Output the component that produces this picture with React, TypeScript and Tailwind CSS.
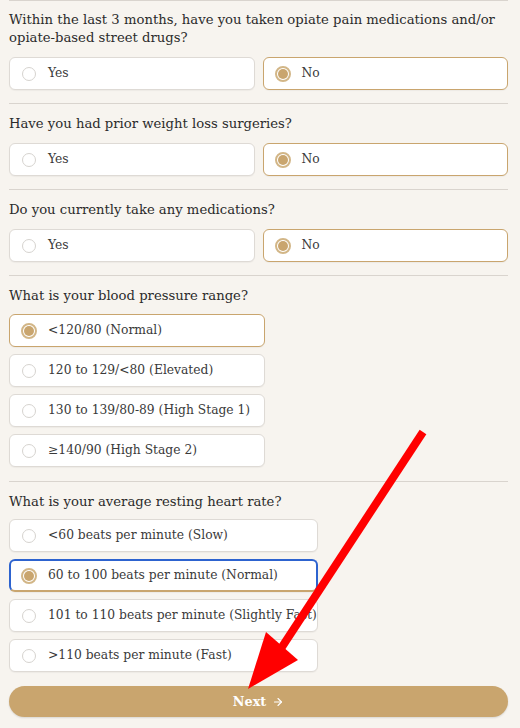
import React, { useState } from "react";
import { ArrowRight } from "lucide-react";

const serif = "font-['DejaVu_Serif','Liberation_Serif',serif]";

type Q = {
  id: string;
  text: string;
  options: string[];
  layout: "row" | "stack";
  width?: string;
  spacing: string;
};

const questions: Q[] = [
  {
    id: "opiate",
    text: "Within the last 3 months, have you taken opiate pain medications and/or opiate-based street drugs?",
    options: ["Yes", "No"],
    layout: "row",
    spacing: "pt-[10px] pb-[13px] [&>h2]:mb-[10px]",
  },
  {
    id: "surgery",
    text: "Have you had prior weight loss surgeries?",
    options: ["Yes", "No"],
    layout: "row",
    spacing: "pt-[11px] pb-[13px] [&>h2]:mb-[10px]",
  },
  {
    id: "meds",
    text: "Do you currently take any medications?",
    options: ["Yes", "No"],
    layout: "row",
    spacing: "pt-[11px] pb-[13px] [&>h2]:mb-[10px]",
  },
  {
    id: "bp",
    text: "What is your blood pressure range?",
    options: [
      "<120/80 (Normal)",
      "120 to 129/<80 (Elevated)",
      "130 to 139/80-89 (High Stage 1)",
      "≥140/90 (High Stage 2)",
    ],
    layout: "stack",
    width: "w-[256px]",
    spacing: "pt-[11px] pb-[14px] [&>h2]:mb-[9px]",
  },
  {
    id: "hr",
    text: "What is your average resting heart rate?",
    options: [
      "<60 beats per minute (Slow)",
      "60 to 100 beats per minute (Normal)",
      "101 to 110 beats per minute (Slightly Fast)",
      ">110 beats per minute (Fast)",
    ],
    layout: "stack",
    width: "w-[309px]",
    spacing: "pt-[11px] pb-[14px] [&>h2]:mb-[8px]",
  },
];

function Radio({ checked }: { checked: boolean }) {
  if (checked) {
    return (
      <span className="flex h-[16px] w-[16px] shrink-0 items-center justify-center rounded-full border-2 border-[#d2b687] bg-white">
        <span className="h-[10px] w-[10px] rounded-full bg-[#c9a56e]" />
      </span>
    );
  }
  return <span className="mx-px h-[14px] w-[14px] shrink-0 rounded-full border border-[#d6d3cf] bg-white" />;
}

function Option({
  label,
  checked,
  focused,
  onClick,
  className,
}: {
  label: string;
  checked: boolean;
  focused?: boolean;
  onClick: () => void;
  className?: string;
}) {
  const border = focused
    ? "border-2 border-[#2d63cf] border-b-[#c9a56e] pl-[10px]"
    : checked
      ? "border border-[#c9a56e] pl-[11px]"
      : "border border-[#dedad5] pl-[11px]";
  return (
    <button
      type="button"
      onClick={onClick}
      className={`flex h-[33px] items-center gap-[11px] rounded-md bg-white text-left text-[12.3px] text-[#3a3a3a] shadow-[0_1px_1px_rgba(0,0,0,0.04)] ${border} ${className ?? ""}`}
    >
      <Radio checked={checked} />
      <span className="whitespace-nowrap">{label}</span>
    </button>
  );
}

export default function App() {
  const [answers, setAnswers] = useState<Record<string, string>>({
    opiate: "No",
    surgery: "No",
    meds: "No",
    bp: "<120/80 (Normal)",
    hr: "60 to 100 beats per minute (Normal)",
  });

  return (
    <div className={`relative min-h-[728px] bg-[#f7f4ef] pl-[9px] pr-[12px] ${serif}`}>
      {questions.map((q) => (
        <section key={q.id} className={`border-t border-[#d9d4ce] ${q.spacing}`}>
          <h2 className="text-[13.2px] leading-[18px] text-[#2b2b2b]">{q.text}</h2>
          {q.layout === "row" ? (
            <div className="grid grid-cols-2 gap-2">
              {q.options.map((o) => (
                <Option
                  key={o}
                  label={o}
                  checked={answers[q.id] === o}
                  onClick={() => setAnswers({ ...answers, [q.id]: o })}
                />
              ))}
            </div>
          ) : (
            <div className="flex flex-col gap-[7px]">
              {q.options.map((o) => (
                <Option
                  key={o}
                  label={o}
                  checked={answers[q.id] === o}
                  focused={q.id === "hr" && answers[q.id] === o}
                  onClick={() => setAnswers({ ...answers, [q.id]: o })}
                  className={q.width}
                />
              ))}
            </div>
          )}
        </section>
      ))}

      <button
        type="button"
        className="flex h-[31px] w-full items-center justify-center gap-1.5 rounded-full bg-[#c9a56e] text-[12.8px] font-bold text-white shadow-[0_1px_2px_rgba(0,0,0,0.12)]"
      >
        Next <ArrowRight size={12} strokeWidth={2.2} />
      </button>

      {/* annotation arrow drawn over the form */}
      <svg
        className="pointer-events-none absolute left-0 top-0"
        width="520"
        height="728"
        viewBox="0 0 520 728"
      >
        <line x1="423" y1="432" x2="280" y2="650" stroke="#ff0000" strokeWidth="8" />
        <polygon points="248,689 266,632 298,660" fill="#ff0000" />
      </svg>
    </div>
  );
}
